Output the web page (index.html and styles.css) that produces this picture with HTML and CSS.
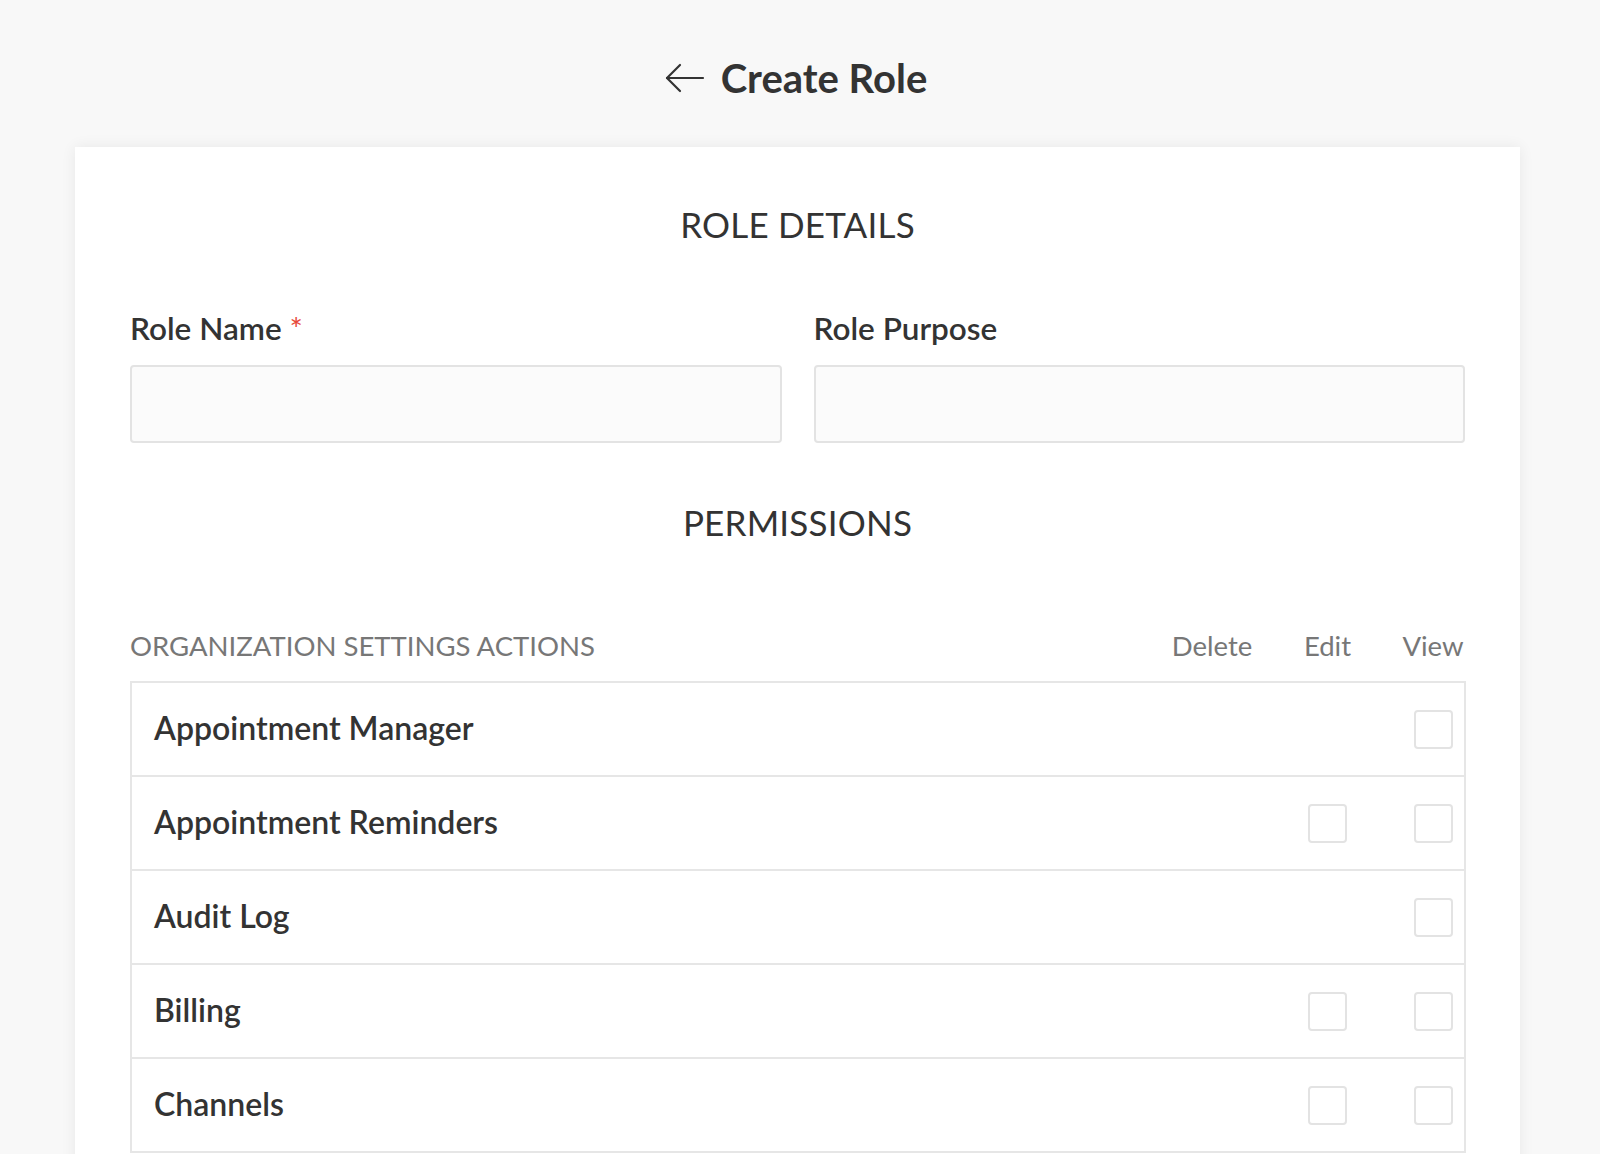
FILE: index.html
```html
<!DOCTYPE html>
<html lang="en">
<head>
<meta charset="utf-8">
<title>Create Role</title>
<link rel="stylesheet" href="styles.css">
</head>
<body>
  <header class="page-header">
    <a class="back" href="#" aria-label="Back">
      <svg width="40" height="30" viewBox="0 0 40 30" fill="none" stroke="#333" stroke-width="2.2" stroke-linecap="round" stroke-linejoin="round">
        <path d="M38 15H2"/>
        <path d="M15 2L2 15l13 13"/>
      </svg>
    </a>
    <h1 class="page-title">Create Role</h1>
  </header>

  <main class="card">
    <h2 class="section-title">ROLE DETAILS</h2>
    <div class="fields">
      <div class="field">
        <label class="field-label">Role Name <span class="req">*</span></label>
        <input class="field-input" type="text">
      </div>
      <div class="field">
        <label class="field-label">Role Purpose</label>
        <input class="field-input" type="text">
      </div>
    </div>

    <h2 class="section-title perms-title">PERMISSIONS</h2>

    <div class="perm-head">
      <span class="perm-group">ORGANIZATION SETTINGS ACTIONS</span>
      <span class="perm-col">Delete</span>
      <span class="perm-col">Edit</span>
      <span class="perm-col">View</span>
    </div>

    <div class="perm-table">
      <div class="perm-row">
        <span class="perm-name">Appointment Manager</span>
        <span class="cell"></span>
        <span class="cell"></span>
        <span class="cell"><span class="box"></span></span>
      </div>
      <div class="perm-row">
        <span class="perm-name">Appointment Reminders</span>
        <span class="cell"></span>
        <span class="cell"><span class="box"></span></span>
        <span class="cell"><span class="box"></span></span>
      </div>
      <div class="perm-row">
        <span class="perm-name">Audit Log</span>
        <span class="cell"></span>
        <span class="cell"></span>
        <span class="cell"><span class="box"></span></span>
      </div>
      <div class="perm-row">
        <span class="perm-name">Billing</span>
        <span class="cell"></span>
        <span class="cell"><span class="box"></span></span>
        <span class="cell"><span class="box"></span></span>
      </div>
      <div class="perm-row">
        <span class="perm-name">Channels</span>
        <span class="cell"></span>
        <span class="cell"><span class="box"></span></span>
        <span class="cell"><span class="box"></span></span>
      </div>
    </div>
  </main>
</body>
</html>
```
FILE: styles.css
```css
* { box-sizing: border-box; }

html, body {
  margin: 0;
  padding: 0;
  background: #f8f8f8;
  font-family: Lato, "Open Sans", "Liberation Sans", sans-serif;
  color: #333;
}

body { overflow: hidden; height: 1154px; }

.page-header {
  display: flex;
  justify-content: center;
  align-items: center;
  gap: 16px;
  padding-top: 54px;
  height: 102px;
}

.back {
  display: flex;
  align-items: center;
  margin-left: -8px;
}

.page-title {
  margin: 0;
  font-size: 40px;
  line-height: 48px;
  font-weight: 700;
  color: #333;
}

.card {
  margin: 45px 80px 0 75px;
  width: 1445px;
  background: #fff;
  box-shadow: 0 0 14px rgba(0, 0, 0, 0.07);
  padding: 56px 55px 120px;
}

.section-title {
  margin: 0;
  text-align: center;
  font-size: 35px;
  line-height: 42px;
  font-weight: 400;
  color: #333;
  letter-spacing: 0.2px;
}

.fields {
  display: grid;
  grid-template-columns: 1fr 1fr;
  column-gap: 32px;
  margin-top: 64px;
}

.field { display: flex; flex-direction: column; }

.field-label {
  font-size: 31.5px;
  line-height: 38px;
  font-weight: 600;
  color: #333;
}

.req { color: #e8493a; font-weight: 400; }

.field-input {
  margin-top: 18px;
  height: 78px;
  border: 2px solid #e3e3e3;
  border-radius: 4px;
  background: #fbfbfb;
  font: inherit;
  outline: none;
}

.perms-title { margin-top: 58px; }

.perm-head, .perm-row {
  display: grid;
  grid-template-columns: 1fr 82px 149px 62px;
  align-items: center;
}

.perm-head {
  margin-top: 85px;
  padding: 0 1px 0 0;
  height: 34px;
  margin-bottom: 19px;
  font-size: 27.5px;
  color: #777;
}

.perm-col { text-align: center; }

.perm-table {
  border: 2px solid #e6e6e6;
  border-bottom: 0;
  margin-right: -1px;
}

.perm-row {
  height: 94px;
  border-bottom: 2px solid #e6e6e6;
  padding-left: 22px;
}

.perm-name {
  font-size: 32px;
  line-height: 38px;
  padding-bottom: 3px;
  font-weight: 600;
  color: #333;
}

.cell { display: flex; justify-content: center; }

.box {
  width: 39px;
  height: 39px;
  border: 2px solid #e3e3e3;
  border-radius: 4px;
  background: #fff;
}
```
